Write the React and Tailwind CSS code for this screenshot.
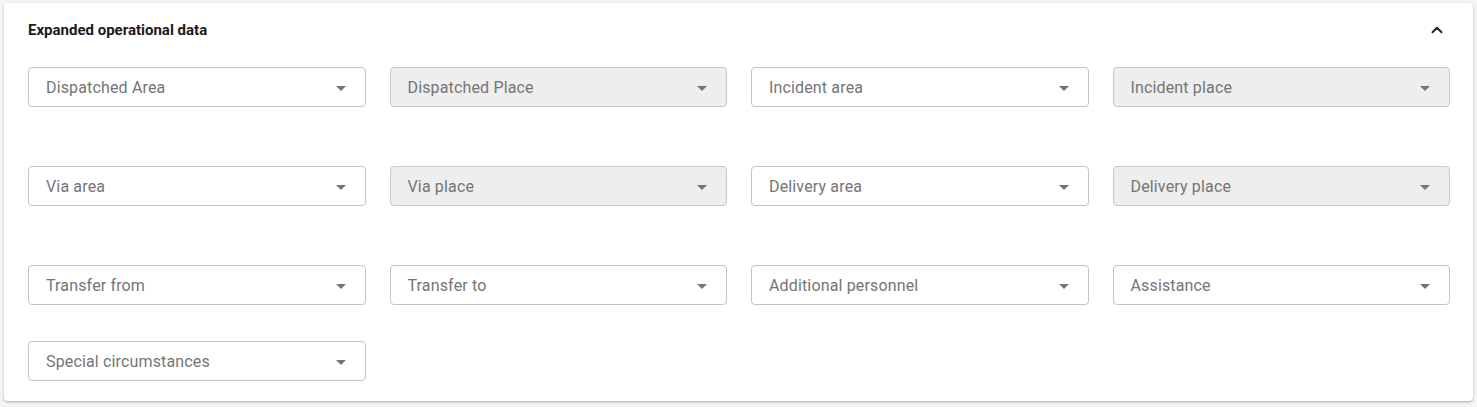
import { ChevronUp } from "lucide-react";

const rows = [
  [
    { label: "Dispatched Area" },
    { label: "Dispatched Place", disabled: true },
    { label: "Incident area" },
    { label: "Incident place", disabled: true },
  ],
  [
    { label: "Via area" },
    { label: "Via place", disabled: true },
    { label: "Delivery area" },
    { label: "Delivery place", disabled: true },
  ],
  [
    { label: "Transfer from" },
    { label: "Transfer to" },
    { label: "Additional personnel" },
    { label: "Assistance" },
  ],
];

function SelectField({ label, disabled }) {
  return (
    <div
      className={`h-10 flex items-center justify-between rounded border pl-[17px] pr-[19px] ${
        disabled ? "bg-[#eeeeee] border-[#c8c8c8]" : "bg-white border-[#c4c4c4]"
      }`}
    >
      <span className="text-base text-[#757575] leading-none tracking-[0.15px] pt-[2px]">{label}</span>
      <svg width="10" height="5" viewBox="0 0 10 5" className="mt-[2px]">
        <path d="M0 0 L5 5 L10 0 Z" fill="#757575" />
      </svg>
    </div>
  );
}

export default function App() {
  return (
    <div
      className="min-h-screen bg-[#f5f5f5] pt-[3px] pl-1 pr-1"
      style={{ fontFamily: "Roboto, 'Liberation Sans', sans-serif" }}
    >
      <div className="bg-white rounded shadow-[0_1px_3px_rgba(0,0,0,0.25),0_1px_1px_rgba(0,0,0,0.08)] pl-6 pr-[23px] pt-[19px] pb-5">
        <div className="flex items-center justify-between h-4">
          <h2 className="text-[15px] font-bold text-[#1a1a1a]">Expanded operational data</h2>
          <ChevronUp size={18} strokeWidth={2.6} className="text-[#222] mr-[4px]" />
        </div>

        <div className="mt-[29px] flex flex-col gap-[59px]">
          {rows.map((row, i) => (
            <div key={i} className="grid grid-cols-4 gap-6">
              {row.map((f) => (
                <SelectField key={f.label} {...f} />
              ))}
            </div>
          ))}
        </div>

        <div className="mt-9 grid grid-cols-4 gap-6">
          <SelectField label="Special circumstances" />
        </div>
      </div>
    </div>
  );
}
